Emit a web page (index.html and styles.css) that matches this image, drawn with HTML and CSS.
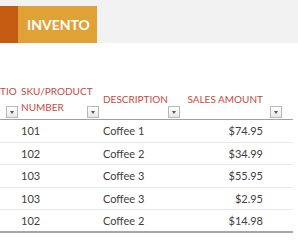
FILE: index.html
```html
<!DOCTYPE html>
<html lang="en">
<head>
    <meta charset="UTF-8">
    <meta name="viewport" content="width=device-width, initial-scale=1.0">
    <title>Inventory List</title>
    <link rel="stylesheet" href="styles.css">
</head>
<body>
    <div class="banner">
        <div class="accent"></div>
        <div class="title">INVENTO</div>
    </div>

    <div class="sheet">
        <div class="row head">
            <div class="cell loc"><span class="first-line">TIO</span><span class="filter"></span></div>
            <div class="cell sku"><span>SKU/PRODUCT<br>NUMBER</span><span class="filter"></span></div>
            <div class="cell desc"><span>DESCRIPTION</span><span class="filter"></span></div>
            <div class="cell amount"><span>SALES AMOUNT</span><span class="filter"></span></div>
            <div class="cell"></div>
        </div>

        <div class="row">
            <div class="cell"></div>
            <div class="cell sku">101</div>
            <div class="cell desc">Coffee 1</div>
            <div class="cell amount">$74.95</div>
            <div class="cell"></div>
        </div>
        <div class="row">
            <div class="cell"></div>
            <div class="cell sku">102</div>
            <div class="cell desc">Coffee 2</div>
            <div class="cell amount">$34.99</div>
            <div class="cell"></div>
        </div>
        <div class="row">
            <div class="cell"></div>
            <div class="cell sku">103</div>
            <div class="cell desc">Coffee 3</div>
            <div class="cell amount">$55.95</div>
            <div class="cell"></div>
        </div>
        <div class="row">
            <div class="cell"></div>
            <div class="cell sku">103</div>
            <div class="cell desc">Coffee 3</div>
            <div class="cell amount">$2.95</div>
            <div class="cell"></div>
        </div>
        <div class="row">
            <div class="cell"></div>
            <div class="cell sku">102</div>
            <div class="cell desc">Coffee 2</div>
            <div class="cell amount">$14.98</div>
            <div class="cell"></div>
        </div>
    </div>
</body>
</html>
```

FILE: styles.css
```css
body {
    margin: 0;
    background-color: white;
    font-family: Lato, "Open Sans", sans-serif;
}
.banner {
    display: flex;
    height: 43px;
    padding-top: 6px;
    box-sizing: border-box;
    background-color: #f2f2f2;
}
.accent {
    width: 18px;
    background-color: #c55a11;
}
.title {
    width: 79px;
    padding-left: 9px;
    box-sizing: border-box;
    display: flex;
    align-items: center;
    background-color: #e0a236;
    color: white;
    font-weight: bold;
    font-size: 14px;
}
.sheet {
    margin-top: 35px;
    width: 293px;
}
.row {
    display: grid;
    grid-template-columns: 19px 81px 81px 103px 9px;
    height: 22.5px;
    box-sizing: border-box;
    border-bottom: 1px solid #e8e8e8;
    font-size: 11px;
    color: #404040;
}
.row:last-child {
    border-bottom: 2px solid #a6a6a6;
}
.row.head {
    height: 42px;
    border-bottom: 1px solid #a0a0a0;
    font-size: 10px;
    color: #c9483d;
}
.cell {
    display: flex;
    align-items: center;
    padding-left: 2px;
    white-space: nowrap;
}
.cell.desc {
    padding-left: 3px;
}
.cell.amount {
    justify-content: flex-end;
    padding-right: 21px;
}
.cell.loc {
    padding-left: 0;
}
.head .cell {
    position: relative;
    line-height: 16px;
}
.head .first-line {
    padding-bottom: 16px;
}
.filter {
    position: absolute;
    right: 1px;
    bottom: 1px;
    width: 12px;
    height: 12px;
    box-sizing: border-box;
    border: 1px solid #b8b8b8;
    background: linear-gradient(#ffffff, #e6e6e6);
}
.filter::after {
    content: "";
    position: absolute;
    left: 3px;
    top: 4px;
    border-left: 2.5px solid transparent;
    border-right: 2.5px solid transparent;
    border-top: 3px solid #555;
}
.cell.amount .filter {
    right: 2px;
}
```
